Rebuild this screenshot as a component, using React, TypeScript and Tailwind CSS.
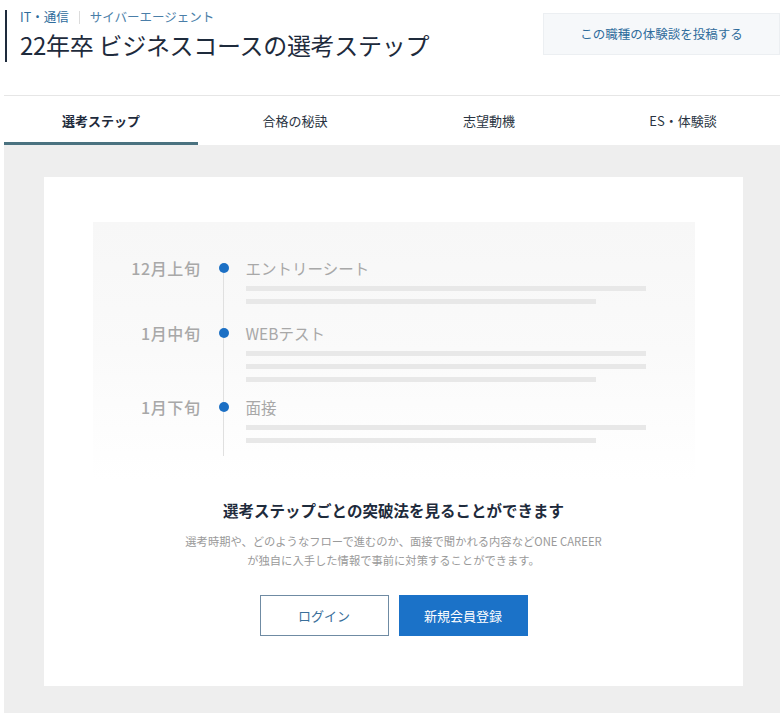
import React from "react";

const steps = [
  { date: "12月上旬", title: "エントリーシート", bars: ["w-full", "w-[350px]"], pad: "pb-[19px]" },
  { date: "1月中旬", title: "WEBテスト", bars: ["w-full", "w-full", "w-[350px]"], pad: "pb-[15px]" },
  { date: "1月下旬", title: "面接", bars: ["w-full", "w-[350px]"], pad: "pb-[13px]" },
];

const tabs = ["選考ステップ", "合格の秘訣", "志望動機", "ES・体験談"];

const App = () => {
  return (
    <div
      className="w-[780px] h-[723px] bg-white overflow-hidden text-[#1e2b3c]"
      style={{ fontFamily: '"Noto Sans CJK JP", "Noto Sans", sans-serif' }}
    >
      {/* Header */}
      <header className="flex items-start justify-between h-[95px] pt-[8px]">
        <div className="ml-[5px] mt-[2px] border-l-[2px] border-[#1e2b3c] pl-[13px] h-[52px]">
          <div className="flex items-center text-[12.5px] leading-[14px] text-[#2f6c9c]">
            <span>IT・通信</span>
            <span className="mx-[10px] h-[13px] w-px bg-[#dcdcdc]" />
            <span className="text-[#4a7ea8]">サイバーエージェント</span>
          </div>
          <h1 className="mt-[4px] text-[24px] leading-[34px] tracking-[-0.3px]">
            22年卒 ビジネスコースの選考ステップ
          </h1>
        </div>
        <button className="mt-[5px] w-[237px] h-[42px] bg-[#f6f8fa] border border-[#eceff2] text-[12.5px] text-[#2f6c9c]">
          この職種の体験談を投稿する
        </button>
      </header>

      {/* Tabs */}
      <nav className="ml-[4px] grid grid-cols-4 h-[50px] border-t border-[#e6e6e6]">
        {tabs.map((t, i) => (
          <div
            key={t}
            className={
              i === 0
                ? "flex items-center justify-center border-b-[3px] border-[#4a7280] pt-[3px] text-[13px] font-bold"
                : "flex items-center justify-center text-[13px] text-[#2a3442]"
            }
          >
            {t}
          </div>
        ))}
      </nav>

      {/* Content */}
      <main className="ml-[4px] bg-[#eeeeee] pt-[32px] pl-[40px] pr-[37px] pb-[27px]">
        <section className="h-[509px] bg-white pt-[45px] flex flex-col items-center">
          <div className="w-[602px] h-[258px] bg-gradient-to-b from-[#f7f7f7] via-[#fafafa] to-white pt-[36px]">
            {steps.map((s, i) => (
              <div key={s.date} className="flex">
                <div className="w-[108px] text-right text-[16px] leading-[20px] tracking-[0.6px] font-medium text-[#a8a8a8]">
                  {s.date}
                </div>
                <div className="ml-[18px] w-[10px] flex flex-col items-center">
                  <span className={i === 0 ? "h-[5px] w-px" : "h-[5px] w-px bg-[#e0e0e0]"} />
                  <span className="h-[10px] w-[10px] rounded-full bg-[#1b6fc4]" />
                  <span className="flex-1 w-px bg-[#e0e0e0]" />
                </div>
                <div className={`ml-[17px] w-[400px] ${s.pad}`}>
                  <div className="text-[15.5px] leading-[20px] text-[#a8a8a8]">{s.title}</div>
                  {s.bars.map((b, j) => (
                    <div key={j} className={`${b} mt-[8px] h-[5px] bg-[#e8e8e8]`} />
                  ))}
                </div>
              </div>
            ))}
          </div>

          <h2 className="mt-[18px] text-[15.5px] leading-[24px] font-bold text-[#1e2b3c]">
            選考ステップごとの突破法を見ることができます
          </h2>
          <p className="mt-[10px] text-center text-[11.3px] leading-[19px] text-[#9a9a9a]">
            選考時期や、どのようなフローで進むのか、面接で聞かれる内容などONE CAREER
            <br />
            が独自に入手した情報で事前に対策することができます。
          </p>

          <div className="mt-[25px] flex gap-[10px]">
            <button className="w-[129px] h-[41px] bg-white border border-[#6f8ba3] text-[13px] text-[#3a6f9a]">
              ログイン
            </button>
            <button className="w-[129px] h-[41px] bg-[#1b72c8] text-[13px] text-white">
              新規会員登録
            </button>
          </div>
        </section>
      </main>
    </div>
  );
};

export default App;
